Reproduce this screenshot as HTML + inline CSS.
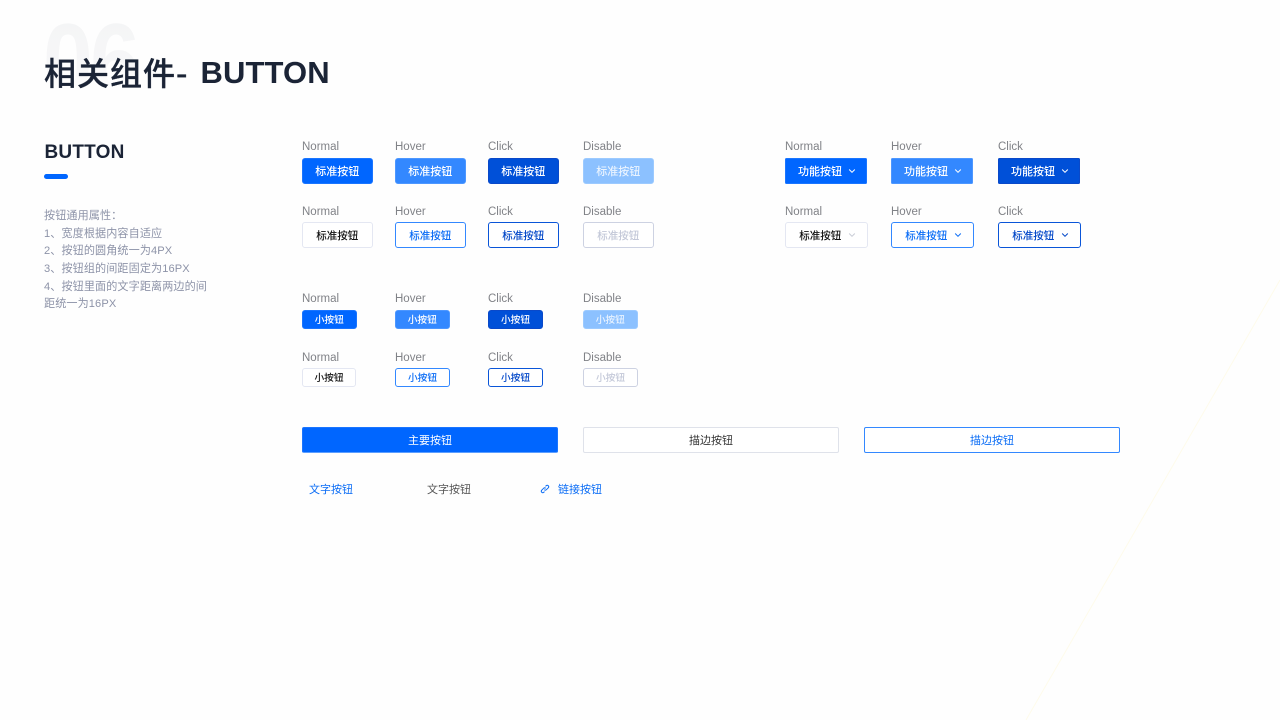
<!DOCTYPE html>
<html lang="zh">
<head>
<meta charset="utf-8">
<title>相关组件- BUTTON</title>
<style>
html,body{margin:0;padding:0}
body{width:1280px;height:720px;position:relative;overflow:hidden;background:#fefefe;font-family:"Liberation Sans","Noto Sans CJK SC",sans-serif}
.a{position:absolute;white-space:nowrap}
.num{left:43px;top:1px;font:700 104px/120px "Liberation Sans",sans-serif;letter-spacing:-3px;transform:scaleX(.86);transform-origin:0 0;background:linear-gradient(#f3f4f5 0,#f7f7f8 55%,#fefefe 72%);-webkit-background-clip:text;background-clip:text;color:transparent}
.title{left:44px;top:50px;font:500 32px/44px "Noto Sans CJK SC",sans-serif;color:#1b2436;letter-spacing:1px;-webkit-text-stroke:.35px #1b2436}
.title2{left:200.5px;top:54px;font:700 31px/38px "Liberation Sans",sans-serif;color:#1b2436;letter-spacing:.1px}
.h2{left:44.5px;top:141px;font:700 19px/23px "Liberation Sans",sans-serif;color:#1b2436;letter-spacing:.2px}
.bar{left:44px;top:174px;width:24px;height:5px;border-radius:2.5px;background:#0066ff}
.desc{left:44px;top:208.2px;font:11.1px/17.6px "Liberation Sans","Noto Sans CJK SC",sans-serif;color:#8d93a8;letter-spacing:.1px}
.l{font-size:11.5px;line-height:14px;color:#808287}
.b{position:absolute;box-sizing:border-box;display:flex;align-items:center;justify-content:center;font:500 11px/1 "Noto Sans CJK SC",sans-serif;border-radius:3px;border:1px solid transparent;white-space:nowrap}
.h{height:26px}.s{height:19px;font-size:9.7px}
.n{background:#0066ff;color:#fff;border-color:#1a75ff}
.v{background:#3388ff;color:#fff;border-color:#4d97ff}
.c{background:#0050d8;color:#fff;border-color:#0a49c9}
.d{background:#8cc1ff;color:#e9f3ff;border-color:#9ccaff}
.on{background:#fff;color:#111;border-color:#e4e7f2;font-size:10.5px}
.ov{background:#fff;color:#0a6cf5;border-color:#3388ff;font-size:10.5px}
.oc{background:#fff;color:#0046c8;border-color:#0a55d8;font-size:10.5px}
.od{background:#fff;color:#c3c8d8;border-color:#cdd2e2;font-size:10.5px}
.h.on,.h.ov,.h.oc,.h.od{padding-top:2px}
.s.on,.s.ov,.s.oc,.s.od{font-size:9.7px}
.fn{border-radius:1.5px}
.big{font-size:11px!important;font-weight:400;border-radius:2px;padding-top:0!important}
.pl{justify-content:flex-start;padding-left:12px}
.pl2{justify-content:flex-start;padding-left:13.3px}
svg.ch{width:8px;height:6px;flex:none;position:absolute;left:61.6px;top:9px}
.t{font-size:11px;line-height:16px}
</style>
</head>
<body>
<svg class="a" style="left:0;top:0" width="1280" height="720"><line x1="1280" y1="280" x2="1026" y2="720" stroke="#fefbeb" stroke-width="1"/></svg>
<div class="a num">06</div>
<div class="a title">相关组件-</div>
<div class="a title2">BUTTON</div>
<div class="a h2">BUTTON</div>
<div class="a bar"></div>
<div class="a desc">按钮通用属性：<br>1、宽度根据内容自适应<br>2、按钮的圆角统一为4PX<br>3、按钮组的间距固定为16PX<br>4、按钮里面的文字距离两边的间<br>距统一为16PX</div>

<div class="a l" style="left:302px;top:140px">Normal</div>
<div class="a l" style="left:395px;top:140px">Hover</div>
<div class="a l" style="left:488px;top:140px">Click</div>
<div class="a l" style="left:583px;top:140px">Disable</div>
<div class="b h n" style="left:302px;top:158px;width:70.5px">标准按钮</div>
<div class="b h v" style="left:395px;top:158px;width:70.5px">标准按钮</div>
<div class="b h c" style="left:488px;top:158px;width:70.5px">标准按钮</div>
<div class="b h d" style="left:583px;top:158px;width:70.5px">标准按钮</div>

<div class="a l" style="left:302px;top:205px">Normal</div>
<div class="a l" style="left:395px;top:205px">Hover</div>
<div class="a l" style="left:488px;top:205px">Click</div>
<div class="a l" style="left:583px;top:205px">Disable</div>
<div class="b h on" style="left:302px;top:222px;width:70.5px">标准按钮</div>
<div class="b h ov" style="left:395px;top:222px;width:70.5px">标准按钮</div>
<div class="b h oc" style="left:488px;top:222px;width:70.5px">标准按钮</div>
<div class="b h od" style="left:583px;top:222px;width:70.5px">标准按钮</div>

<div class="a l" style="left:785px;top:140px">Normal</div>
<div class="a l" style="left:891px;top:140px">Hover</div>
<div class="a l" style="left:998px;top:140px">Click</div>
<div class="b h n fn pl" style="left:785px;top:158px;width:82px">功能按钮<svg class="ch" viewBox="0 0 8 6"><path d="M1.2 1.5 4 4.3 6.8 1.5" fill="none" stroke="#fff" stroke-width="1"/></svg></div>
<div class="b h v fn pl" style="left:891px;top:158px;width:82px">功能按钮<svg class="ch" viewBox="0 0 8 6"><path d="M1.2 1.5 4 4.3 6.8 1.5" fill="none" stroke="#fff" stroke-width="1"/></svg></div>
<div class="b h c fn pl" style="left:998px;top:158px;width:82px">功能按钮<svg class="ch" viewBox="0 0 8 6"><path d="M1.2 1.5 4 4.3 6.8 1.5" fill="none" stroke="#fff" stroke-width="1"/></svg></div>

<div class="a l" style="left:785px;top:205px">Normal</div>
<div class="a l" style="left:891px;top:205px">Hover</div>
<div class="a l" style="left:998px;top:205px">Click</div>
<div class="b h on pl2" style="left:785px;top:222px;width:83px">标准按钮<svg class="ch" viewBox="0 0 8 6"><path d="M1.2 1.5 4 4.3 6.8 1.5" fill="none" stroke="#c9ccd6" stroke-width="1"/></svg></div>
<div class="b h ov pl2" style="left:891px;top:222px;width:83px">标准按钮<svg class="ch" viewBox="0 0 8 6"><path d="M1.2 1.5 4 4.3 6.8 1.5" fill="none" stroke="#0a6cf5" stroke-width="1"/></svg></div>
<div class="b h oc pl2" style="left:998px;top:222px;width:83px">标准按钮<svg class="ch" viewBox="0 0 8 6"><path d="M1.2 1.5 4 4.3 6.8 1.5" fill="none" stroke="#0046c8" stroke-width="1"/></svg></div>

<div class="a l" style="left:302px;top:292px">Normal</div>
<div class="a l" style="left:395px;top:292px">Hover</div>
<div class="a l" style="left:488px;top:292px">Click</div>
<div class="a l" style="left:583px;top:292px">Disable</div>
<div class="b s n" style="left:302px;top:310px;width:54.5px">小按钮</div>
<div class="b s v" style="left:395px;top:310px;width:54.5px">小按钮</div>
<div class="b s c" style="left:488px;top:310px;width:55px">小按钮</div>
<div class="b s d" style="left:583px;top:310px;width:54.5px">小按钮</div>

<div class="a l" style="left:302px;top:350.5px">Normal</div>
<div class="a l" style="left:395px;top:350.5px">Hover</div>
<div class="a l" style="left:488px;top:350.5px">Click</div>
<div class="a l" style="left:583px;top:350.5px">Disable</div>
<div class="b s on" style="left:302px;top:368px;width:54px">小按钮</div>
<div class="b s ov" style="left:395px;top:368px;width:55px">小按钮</div>
<div class="b s oc" style="left:488px;top:368px;width:55px">小按钮</div>
<div class="b s od" style="left:583px;top:368px;width:55px">小按钮</div>

<div class="b h n big" style="left:302px;top:427px;width:256px;border-bottom-color:#5c9eff">主要按钮</div>
<div class="b h on big" style="left:583px;top:427px;width:256px;color:#333;border-color:#dfe2ea">描边按钮</div>
<div class="b h ov big" style="left:864px;top:427px;width:256px;color:#0a6cf5">描边按钮</div>

<div class="a t" style="left:309px;top:482px;color:#0a6cf5">文字按钮</div>
<div class="a t" style="left:427px;top:482px;color:#555">文字按钮</div>
<svg class="a" style="left:540px;top:484px" width="10" height="10" viewBox="0 0 10 10" fill="none" stroke="#0a6cf5" stroke-width="1"><path d="M4.3 5.7a1.5 1.5 0 0 0 2.1 0l2-2a1.5 1.5 0 0 0-2.1-2.1l-.8.8"/><path d="M5.7 4.3a1.5 1.5 0 0 0-2.1 0l-2 2a1.5 1.5 0 0 0 2.1 2.1l.8-.8"/></svg>
<div class="a t" style="left:558px;top:482px;color:#0a6cf5">链接按钮</div>
</body>
</html>
